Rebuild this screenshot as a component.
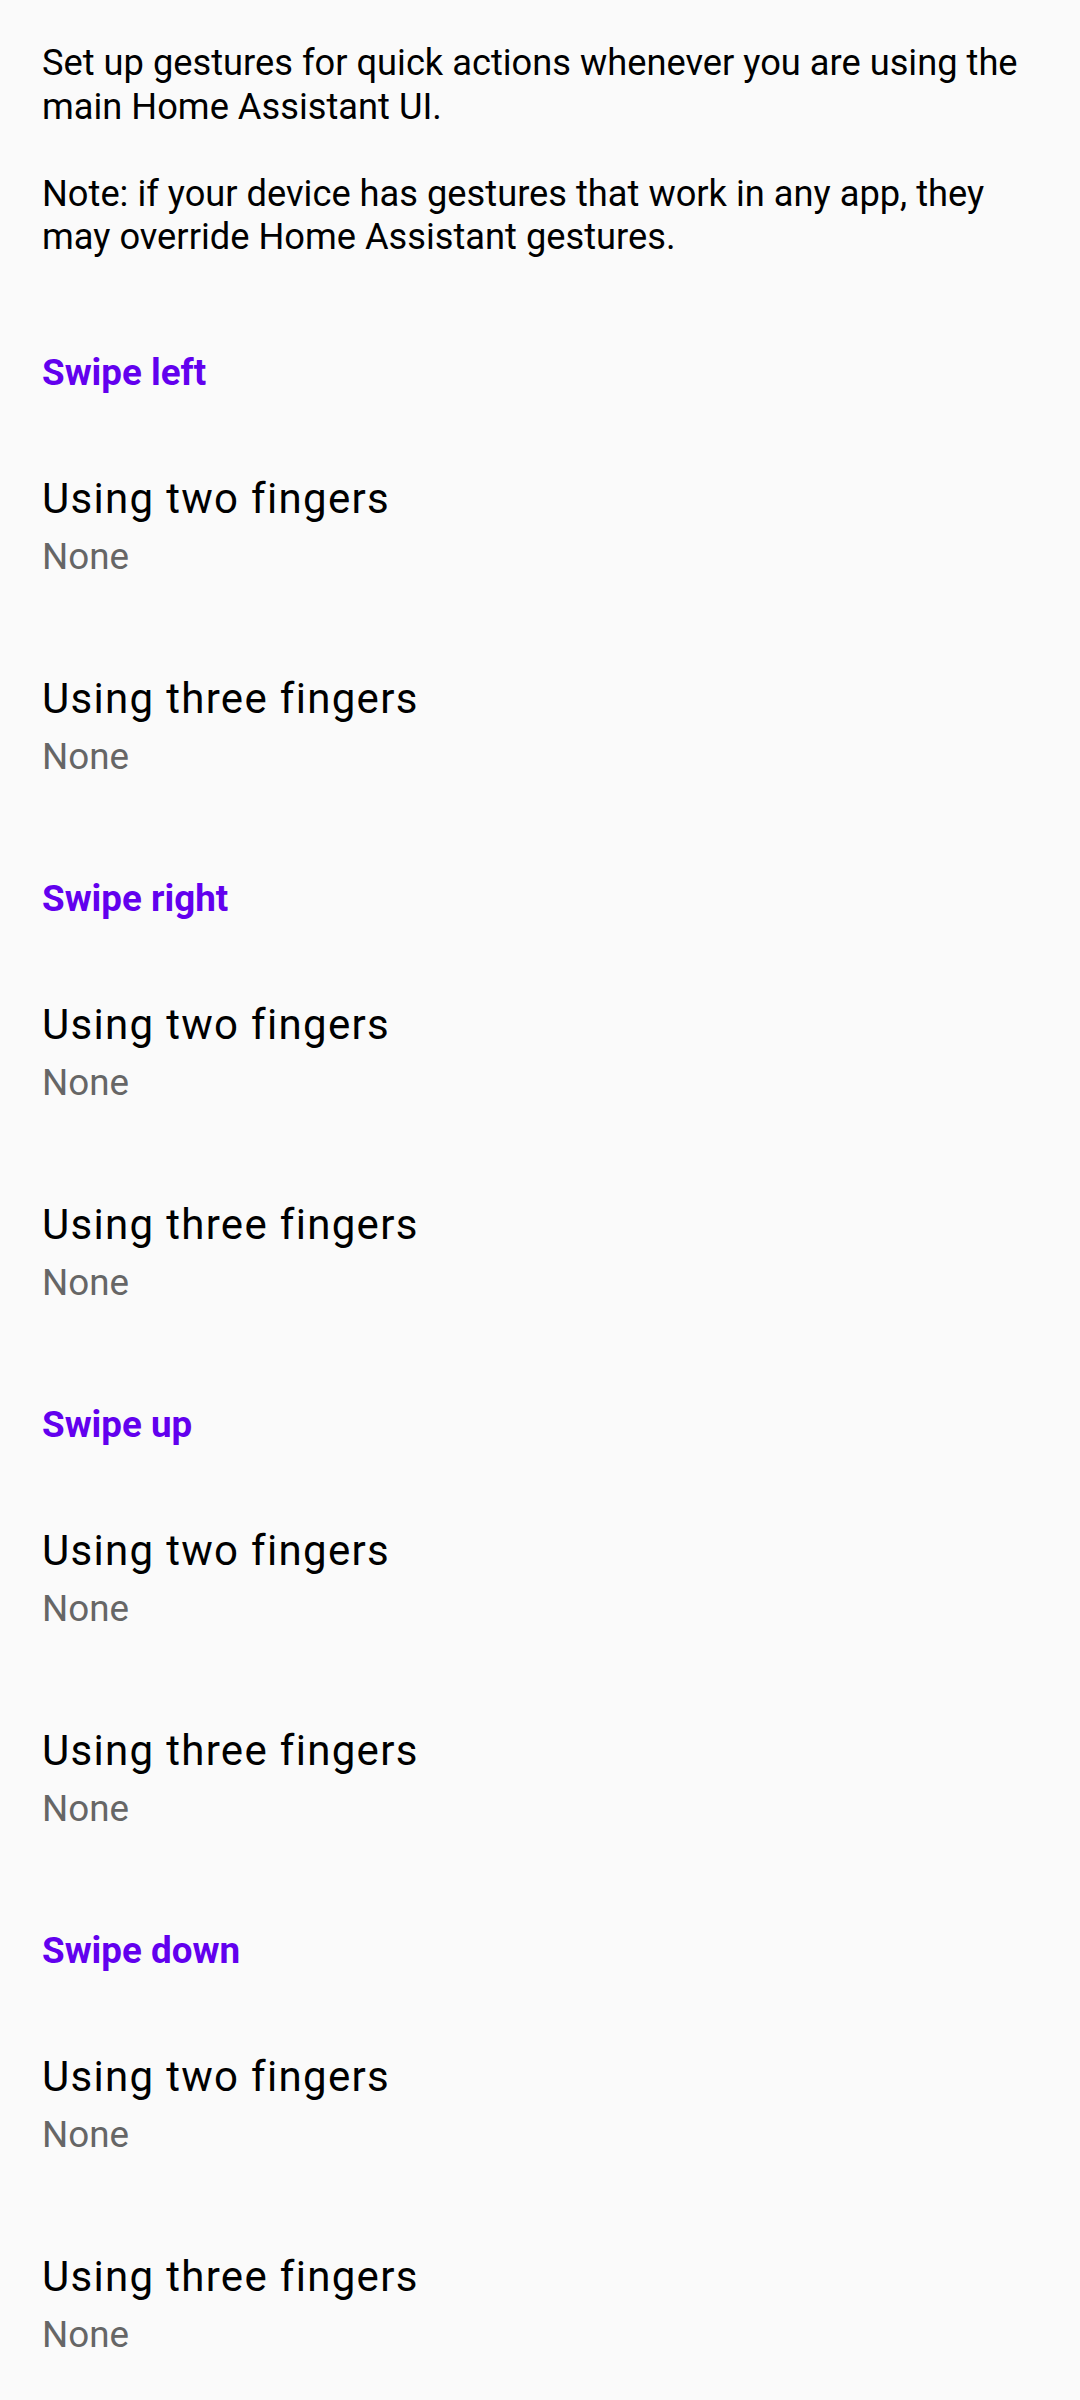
import React from "react";

const sections = ["Swipe left", "Swipe right", "Swipe up", "Swipe down"];
const items = ["Using two fingers", "Using three fingers"];

function Item({ title }: { title: string }) {
  return (
    <div className="pt-[48px] pb-[48px] px-[42px]">
      <div className="text-[42px] leading-[50px] tracking-[0.03125em] text-black">{title}</div>
      <div className="mt-[11px] text-[36.75px] leading-[43px] text-[#666666]">None</div>
    </div>
  );
}

export default function App() {
  return (
    <div
      className="min-h-[2400px] w-[1080px] bg-[#fafafa]"
      style={{ fontFamily: "Roboto, 'Noto Sans', sans-serif" }}
    >
      <div className="pt-[41px] pb-[41px] px-[42px] text-[36.25px] leading-[43.5px] text-black">
        <p>Set up gestures for quick actions whenever you are using the main Home Assistant UI.</p>
        <p className="mt-[43.5px]">Note: if your device has gestures that work in any app, they may override Home Assistant gestures.</p>
      </div>
      {sections.map((s) => (
        <section key={s}>
          <div className="pt-[51px] pb-[32px] px-[42px] text-[36.75px] leading-[43px] font-bold text-[#6200ee]">
            {s}
          </div>
          {items.map((t) => (
            <Item key={t} title={t} />
          ))}
        </section>
      ))}
    </div>
  );
}
